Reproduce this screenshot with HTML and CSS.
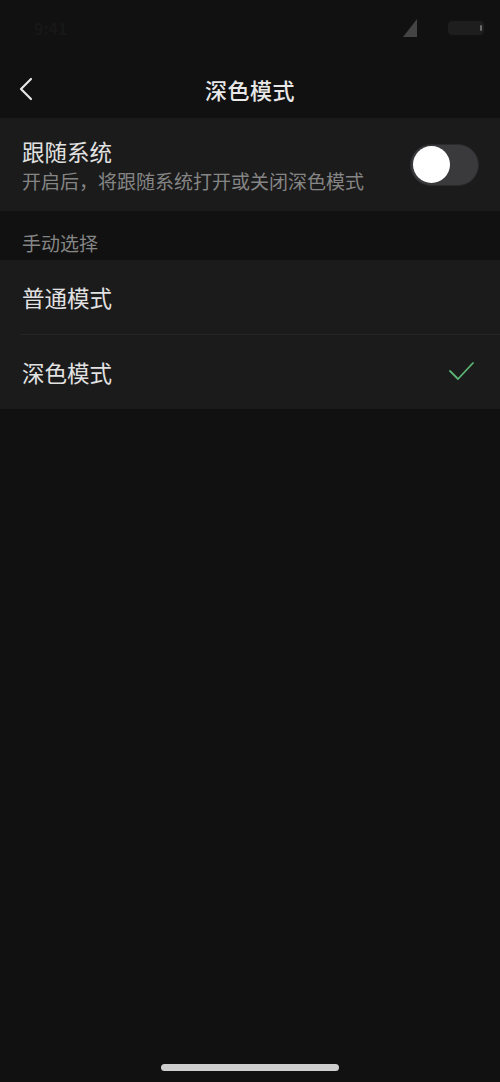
FILE: index.html
```html
<!DOCTYPE html>
<html lang="zh-CN">
<head>
<meta charset="utf-8">
<title>深色模式</title>
<link rel="stylesheet" href="styles.css">
</head>
<body>
<div class="screen">
  <div class="status-bar">
    <span class="time">9:41</span>
    <div class="status-icons">
      <svg class="signal" width="16" height="20" viewBox="0 0 16 20"><path d="M15 1 L15 19 L1 19 Z" fill="#444444"/></svg>
      <span class="battery"><span class="battery-fill"></span></span>
    </div>
  </div>

  <header class="nav-bar">
    <button class="back" aria-label="返回">
      <svg width="16" height="24" viewBox="0 0 16 24"><path d="M13 2 L3 12 L13 22" fill="none" stroke="#e6e6e6" stroke-width="2.2" stroke-linecap="round" stroke-linejoin="round"/></svg>
    </button>
    <h1 class="nav-title">深色模式</h1>
  </header>

  <section class="card">
    <div class="row row-follow">
      <div class="row-text">
        <div class="row-title">跟随系统</div>
        <div class="row-desc">开启后，将跟随系统打开或关闭深色模式</div>
      </div>
      <div class="switch"><span class="knob"></span></div>
    </div>
  </section>

  <div class="section-label">手动选择</div>

  <section class="card">
    <div class="row row-option">
      <span class="row-title">普通模式</span>
    </div>
    <div class="divider"></div>
    <div class="row row-option">
      <span class="row-title">深色模式</span>
      <svg class="check" width="28" height="22" viewBox="0 0 28 22"><path d="M3 11 L11 19 L26 3" fill="none" stroke="#5bb374" stroke-width="1.8" stroke-linecap="round" stroke-linejoin="round"/></svg>
    </div>
  </section>

  <div class="spacer"></div>
  <div class="home-indicator"></div>
</div>
</body>
</html>
```

FILE: styles.css
```css
* { box-sizing: border-box; }

html, body {
  margin: 0;
  padding: 0;
  background: #111111;
}

body {
  font-family: "Noto Sans CJK SC", "Noto Sans", sans-serif;
  color: #e2e2e2;
}

.screen {
  width: 500px;
  height: 1082px;
  display: flex;
  flex-direction: column;
  background: #111111;
}

/* status bar (dim) */
.status-bar {
  height: 60px;
  display: flex;
  justify-content: space-between;
  align-items: center;
  padding: 0 16px 4px 34px;
}
.time {
  font-size: 16px;
  color: #171717;
  font-weight: 600;
}
.status-icons {
  display: flex;
  align-items: center;
  gap: 30px;
}
.battery {
  width: 36px;
  height: 14px;
  border-radius: 4px;
  background: #1e1e1e;
  display: flex;
  justify-content: flex-end;
  align-items: center;
  padding-right: 2px;
}
.battery-fill {
  width: 2px;
  height: 6px;
  background: #6a6a6a;
  border-radius: 1px;
}

/* navigation */
.nav-bar {
  height: 58px;
  display: flex;
  align-items: center;
  justify-content: center;
  position: relative;
}
.back {
  position: absolute;
  left: 18px;
  top: 17px;
  background: none;
  border: 0;
  padding: 0;
  display: flex;
}
.nav-title {
  margin: 0;
  font-size: 22px;
  font-weight: 500;
  color: #e8e8e8;
  letter-spacing: 0.5px;
}

/* cards */
.card {
  background: #1b1b1b;
}
.row {
  display: flex;
  align-items: center;
  justify-content: space-between;
  padding: 0 21px 0 22px;
}
.row-follow {
  height: 93px;
  padding-right: 21px;
}
.row-text {
  display: flex;
  flex-direction: column;
  gap: 2px;
}
.row-title {
  font-size: 22.5px;
  color: #e2e2e2;
  line-height: 30px;
}
.row-desc {
  font-size: 19px;
  color: #858585;
  line-height: 26px;
}

.switch {
  width: 69px;
  height: 42px;
  border-radius: 21px;
  background: #3a3a3d;
  border: 1px solid #2a2a2c;
  display: flex;
  align-items: center;
  padding-left: 2px;
}
.knob {
  width: 37px;
  height: 37px;
  border-radius: 50%;
  background: #ffffff;
}

.section-label {
  height: 49px;
  padding: 18px 22px 0;
  font-size: 19px;
  color: #858585;
  line-height: 28px;
}

.row-option {
  height: 74px;
}
.divider {
  height: 1px;
  margin-left: 20px;
  background: #252525;
}
.check {
  margin-right: 4px;
  margin-top: -2px;
}

.spacer {
  flex: 1;
}
.home-indicator {
  align-self: center;
  width: 178px;
  height: 7px;
  border-radius: 4px;
  background: #cfcfcf;
  margin-bottom: 11px;
}
```
